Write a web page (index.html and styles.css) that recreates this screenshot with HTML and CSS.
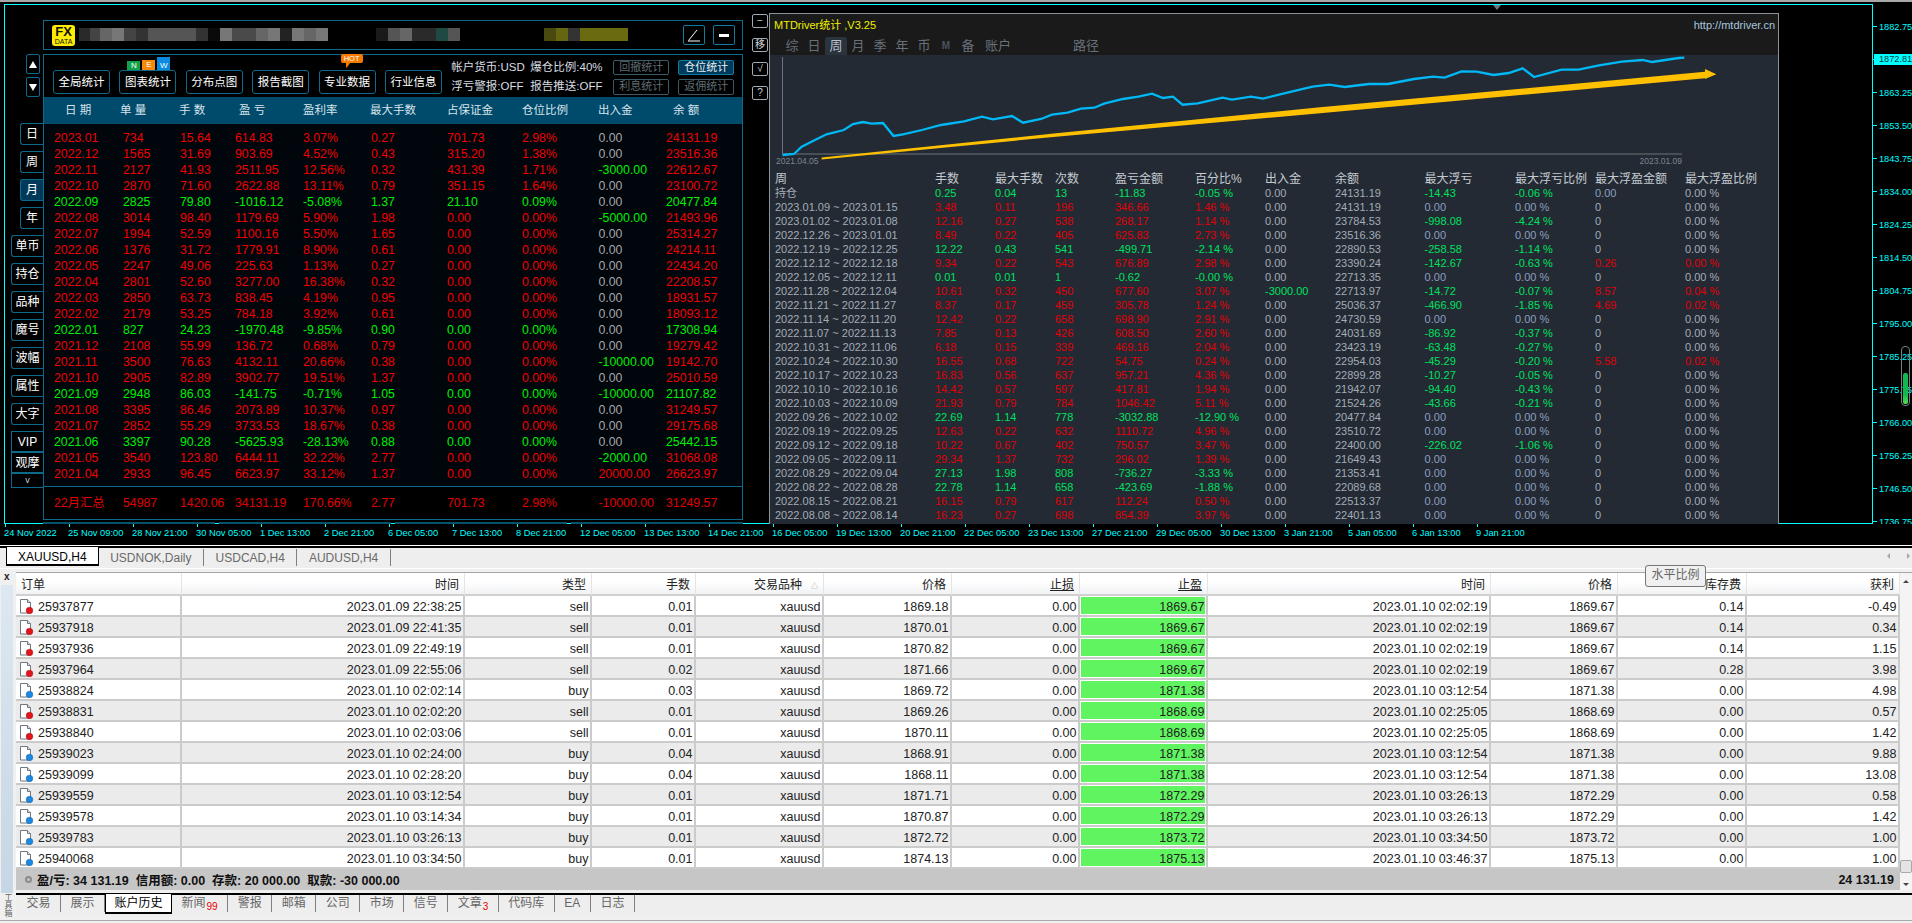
FILE: index.html
```html
<!DOCTYPE html>
<html lang="zh-CN">
<head>
    <meta charset="UTF-8">
    <title>XAUUSD,H4</title>
    <link rel="stylesheet" href="styles.css">
</head>
<body>
    <svg class="icon-defs" width="0" height="0">
        <symbol id="doc-sell" viewBox="0 0 15 15">
            <path d="M1.500.5h7l3 3v10.500h-10z" fill="#fff" stroke="#6f7780"/>
            <path d="M8.500.5v3h3" fill="#dfe3e8" stroke="#6f7780"/>
            <circle cx="10.500" cy="11.500" r="3.300" fill="#e0161c" stroke="#a80f12" stroke-width=".5"/>
        </symbol>
        <symbol id="doc-buy" viewBox="0 0 15 15">
            <path d="M1.500.5h7l3 3v10.500h-10z" fill="#fff" stroke="#6f7780"/>
            <path d="M8.500.5v3h3" fill="#dfe3e8" stroke="#6f7780"/>
            <circle cx="10.500" cy="11.500" r="3.300" fill="#1e88e0" stroke="#1260a8" stroke-width=".5"/>
        </symbol>
    </svg>

    <!-- chart window -->
    <div class="chart">
        <div class="chart-main">
            <div class="plot"></div>
            <div class="price-axis">
                <div class="price">1882.75</div>
                <div class="price"><span class="price-now">1872.81</span></div>
                <div class="price">1863.25</div>
                <div class="price">1853.50</div>
                <div class="price">1843.75</div>
                <div class="price">1834.00</div>
                <div class="price">1824.25</div>
                <div class="price">1814.50</div>
                <div class="price">1804.75</div>
                <div class="price">1795.00</div>
                <div class="price">1785.25</div>
                <div class="price">1775.75</div>
                <div class="price">1766.00</div>
                <div class="price">1756.25</div>
                <div class="price">1746.50</div>
                <div class="price">1736.75</div>
            </div>
        </div>
        <div class="time-axis">
            <span>24 Nov 2022</span><span>25 Nov 09:00</span><span>28 Nov 21:00</span><span>30 Nov 05:00</span>
            <span>1 Dec 13:00</span><span>2 Dec 21:00</span><span>6 Dec 05:00</span><span>7 Dec 13:00</span>
            <span>8 Dec 21:00</span><span>12 Dec 05:00</span><span>13 Dec 13:00</span><span>14 Dec 21:00</span>
            <span>16 Dec 05:00</span><span>19 Dec 13:00</span><span>20 Dec 21:00</span><span>22 Dec 05:00</span>
            <span>23 Dec 13:00</span><span>27 Dec 21:00</span><span>29 Dec 05:00</span><span>30 Dec 13:00</span>
            <span>3 Jan 21:00</span><span>5 Jan 05:00</span><span>6 Jan 13:00</span><span>9 Jan 21:00</span>
        </div>

        <div class="shift-mark"></div>
        <div class="thermo"><div class="thermo-fill"></div></div>

        <!-- FX DATA panel -->
        <div class="scroll-btns">
            <div class="scroll-btn"><i class="tri-up"></i></div>
            <div class="scroll-btn"><i class="tri-down"></i></div>
        </div>
        <div class="side-tabs">
            <div class="side-tab">日</div>
            <div class="side-tab">周</div>
            <div class="side-tab active">月</div>
            <div class="side-tab">年</div>
            <div class="side-tab wide">单币</div>
            <div class="side-tab wide">持仓</div>
            <div class="side-tab wide">品种</div>
            <div class="side-tab wide">魔号</div>
            <div class="side-tab wide">波幅</div>
            <div class="side-tab wide">属性</div>
            <div class="side-tab wide">大字</div>
            <div class="side-stack">
                <div class="side-tab wide">VIP</div>
                <div class="side-tab wide">观摩</div>
                <div class="side-tab wide more">v</div>
            </div>
        </div>

        <div class="fx-panel">
            <div class="fx-head">
                <div class="fx-logo"><b>FX</b><span>DATA</span></div>
                <div class="fx-blur"></div>
                <div class="fx-tool">
                    <svg width="16" height="14" viewBox="0 0 16 14"><path d="M2 13h12M2.500 12.500 11 2" fill="none" stroke="#fff"/></svg>
                </div>
                <div class="fx-tool"><span class="fx-minus"></span></div>
            </div>
            <div class="fx-box">
                <div class="fx-toolbar">
                    <div class="fx-btn">全局统计</div>
                    <div class="fx-btn">图表统计
                        <div class="new-badge"><i class="n">N</i><i class="e">E</i><i class="w">W</i></div>
                    </div>
                    <div class="fx-btn">分布点图</div>
                    <div class="fx-btn">报告截图</div>
                    <div class="fx-btn">专业数据<i class="hot-badge">HOT</i></div>
                    <div class="fx-btn">行业信息</div>
                    <div class="fx-info">
                        <span>帐户货币:USD</span>
                        <span>爆仓比例:40%</span>
                        <div class="fx-mini">回撤统计</div>
                        <div class="fx-mini on">仓位统计</div>
                        <span>浮亏警报:OFF</span>
                        <span>报告推送:OFF</span>
                        <div class="fx-mini">利息统计</div>
                        <div class="fx-mini">返佣统计</div>
                    </div>
                </div>
                <div class="fx-thead">
                    <span>日 期</span><span>单 量</span><span>手 数</span><span>盈 亏</span><span>盈利率</span>
                    <span>最大手数</span><span>占保证金</span><span>仓位比例</span><span>出入金</span><span>余 额</span>
                </div>
                <div class="fx-rows" id="monthRows"></div>
                <div class="fx-row fx-total">
                    <span>22月汇总</span><span>54987</span><span>1420.06</span><span>34131.19</span><span>170.66%</span>
                    <span>2.77</span><span>701.73</span><span>2.98%</span><span>-10000.00</span><span>31249.57</span>
                </div>
            </div>
            <div class="fx-marks"><i></i><i></i><i></i><i></i></div>
        </div>

        <!-- MTDriver panel -->
        <div class="md-btns">
            <div class="md-btn">−</div>
            <div class="md-btn">移</div>
            <div class="md-btn">√</div>
            <div class="md-btn">?</div>
        </div>
        <div class="md-panel">
            <div class="md-head">
                <div class="md-title">
                    <span>MTDriver统计 ,V3.25</span>
                    <span class="md-url">http://mtdriver.cn</span>
                </div>
                <div class="md-tabs">
                    <span>综</span><span>日</span><span class="active">周</span><span>月</span><span>季</span>
                    <span>年</span><span>币</span><span class="dim">M</span><span>备</span>
                    <span class="long">账户</span><span class="path">路径</span>
                </div>
            </div>
            <svg class="md-chart" width="1009" height="117" viewBox="770 55 1009 117">
                <path d="M782.500 57V154H1682" fill="none" stroke="#6c737b"/>
                <polyline fill="none" stroke="#00b8f5" stroke-width="2.300" points="782.500,155 794,154 801.700,146.700 813,141 826.500,134.300 843.800,130 853,124 863,122 871.700,123.700 883,123 893.500,136 903,134.300 922,130 941,125 964,121.300 982,116.700 993,119.300 1012,116 1023,122.700 1041,119 1052,114.700 1067.600,112.700 1081,108.700 1094.400,107.700 1104,103.700 1123,99 1138.400,96.700 1152,93.700 1163,98 1173,96.700 1182.500,104.700 1197.700,103.300 1222.600,97.700 1232,99.700 1251,96.700 1263,98.700 1280,94.300 1301,89.300 1312.600,86.700 1329.400,84.700 1344.500,87 1369,84 1388,84 1414,79 1433,76.700 1444.600,77.700 1461.600,71.300 1476.700,71.700 1493.600,75 1508.800,73 1522.700,68.300 1534,77 1561.600,69.700 1578.600,69.700 1599,65.300 1622,61.700 1642.800,60 1652,62 1678.600,58 1684.300,57.700"/>
                <polygon fill="#ffc000" points="821.600,157.400 1056,133.300 1320,107.300 1705,71.700 1705,69 1716.400,74.300 1705,79 1705,78.300 1320,113.300 1056,136.700 821.600,159.400"/>
                <text class="md-date" x="776" y="164">2021.04.05</text>
                <text class="md-date" x="1682" y="164" text-anchor="end">2023.01.09</text>
            </svg>
            <div class="md-thead md-row">
                <span>周</span><span>手数</span><span>最大手数</span><span>次数</span><span>盈亏金额</span><span>百分比%</span>
                <span>出入金</span><span>余额</span><span>最大浮亏</span><span>最大浮亏比例</span><span>最大浮盈金额</span><span>最大浮盈比例</span>
            </div>
            <div id="weekRows"></div>
        </div>
    </div>

    <!-- open chart tabs -->
    <div class="symbol-tabs">
        <div class="symbol-tab active">XAUUSD,H4</div>
        <div class="symbol-tab">USDNOK,Daily</div>
        <div class="symbol-tab">USDCAD,H4</div>
        <div class="symbol-tab">AUDUSD,H4</div>
        <div class="symbol-nav"><i class="prev"></i><i class="next"></i></div>
    </div>

    <!-- terminal -->
    <div class="terminal">
        <div class="term-side">
            <div class="term-close">x</div>
            <div class="term-strip"></div>
            <div class="term-label">工具箱</div>
        </div>
        <div class="term-main">
            <div class="history">
                <div class="history-body">
                    <table class="orders">
                        <colgroup>
                            <col class="c-id"><col class="c-time"><col class="c-type"><col class="c-lot"><col class="c-price"><col class="c-price">
                            <col class="c-price"><col class="c-price"><col class="c-time"><col class="c-type"><col class="c-swap"><col class="c-profit">
                        </colgroup>
                        <thead>
                            <tr>
                                <th class="left">订单</th><th>时间</th><th>类型</th><th>手数</th>
                                <th>交易品种<i class="sort">△</i></th><th>价格</th><th class="mark">止损</th><th class="mark">止盈</th>
                                <th>时间</th><th>价格</th><th>库存费</th><th>获利</th>
                            </tr>
                        </thead>
                        <tbody id="orderRows"></tbody>
                    </table>
                    <div class="summary">
                        <span class="summary-dot"></span>
                        <span>盈/亏: 34 131.19&nbsp; 信用额: 0.00&nbsp; 存款: 20 000.00&nbsp; 取款: -30 000.00</span>
                        <span class="summary-total">24 131.19</span>
                    </div>
                </div>
                <div class="scrollbar">
                    <i class="arrow-up"></i>
                    <div class="thumb"></div>
                    <i class="arrow-down"></i>
                </div>
            </div>
            <div class="term-tabs">
                <div class="term-tab">交易</div>
                <div class="term-tab">展示</div>
                <div class="term-tab active">账户历史</div>
                <div class="term-tab">新闻<sub>99</sub></div>
                <div class="term-tab">警报</div>
                <div class="term-tab">邮箱</div>
                <div class="term-tab">公司</div>
                <div class="term-tab">市场</div>
                <div class="term-tab">信号</div>
                <div class="term-tab">文章<sub>3</sub></div>
                <div class="term-tab">代码库</div>
                <div class="term-tab">EA</div>
                <div class="term-tab">日志</div>
            </div>
            <div class="status-bar"></div>
        </div>
    </div>

    <div class="tooltip">水平比例</div>

    <script src="rows.js"></script>
</body>
</html>
```

FILE: styles.css
```css
* {
    box-sizing: border-box;
}
body {
    position: relative;
    width: 1912px;
    height: 923px;
    margin: 0;
    overflow: hidden;
    background: #f0f0f0;
    font-family: "Liberation Sans", "Noto Sans CJK SC", sans-serif;
    font-size: 12px;
}
i {
    font-style: normal;
}
.icon-defs {
    position: absolute;
}

/* chart window */
.chart {
    position: relative;
    height: 546px;
    padding-top: 4px;
    background: #000;
    border-bottom: 1px solid #fff;
    box-shadow: inset 0 2px #a8a8a8;
}
.chart-main {
    display: flex;
}
.plot {
    width: 1869px;
    height: 520px;
    margin-left: 4px;
    border: 1px solid #00ffff;
}
.price-axis {
    width: 39px;
    height: 520px;
    padding-top: 6px;
    overflow: hidden;
}
.price {
    display: flex;
    align-items: center;
    height: 33px;
    padding-left: 6px;
    color: #00ffff;
    font-size: 9.2px;
    position: relative;
}
.price::before {
    content: "";
    position: absolute;
    left: 0;
    top: 16px;
    width: 4px;
    height: 1px;
    background: #00ffff;
}
.price-now {
    flex: none;
    width: 38px;
    height: 11px;
    margin-left: -5px;
    padding-left: 5px;
    background: #00ffff;
    color: #004040;
    line-height: 11px;
}
.time-axis {
    display: flex;
    padding-left: 4px;
    color: #00ffff;
    font-size: 9.3px;
    white-space: nowrap;
}
.time-axis span {
    flex: none;
    width: 64px;
}
.time-axis span::before {
    content: "";
    display: block;
    width: 1px;
    height: 3px;
    margin-left: 1px;
    margin-bottom: 1px;
    background: #00ffff;
}
.shift-mark {
    position: absolute;
    left: 1493px;
    top: 5px;
    border: 4px solid transparent;
    border-top: 5px solid #6c7680;
}
.thermo {
    position: absolute;
    left: 1901px;
    top: 346px;
    width: 9px;
    height: 60px;
    padding: 1px;
    display: flex;
    align-items: flex-end;
    border: 1px solid #77808a;
    border-radius: 4px;
}
.thermo-fill {
    width: 100%;
    height: 31px;
    border-radius: 2px;
    background: linear-gradient(#12b84e 70%, #58e050);
}

/* FX DATA panel */
.scroll-btns {
    position: absolute;
    left: 26px;
    top: 54px;
    display: flex;
    flex-direction: column;
    gap: 3px;
}
.scroll-btn {
    display: flex;
    align-items: center;
    justify-content: center;
    width: 14px;
    height: 20px;
    border: 1px solid #0d6a8a;
    border-radius: 2px;
}
.tri-up {
    border: 4px solid transparent;
    border-top: none;
    border-bottom: 7px solid #fff;
}
.tri-down {
    border: 4px solid transparent;
    border-bottom: none;
    border-top: 7px solid #fff;
}
.side-tabs {
    position: absolute;
    right: 1869px;
    top: 123px;
    display: flex;
    flex-direction: column;
    align-items: flex-end;
    gap: 6px;
}
.side-stack {
    display: flex;
    flex-direction: column;
    align-items: flex-end;
}
.side-tab {
    width: 23px;
    height: 22px;
    border: 1px solid #0d6a8a;
    border-right: none;
    border-radius: 3px 0 0 3px;
    color: #fff;
    font-size: 12px;
    line-height: 20px;
    text-align: center;
}
.side-tab.wide {
    width: 32px;
}
.side-stack .side-tab {
    border-radius: 0;
    height: 21px;
}
.side-stack .side-tab.more {
    height: 15px;
    font-size: 9px;
    line-height: 12px;
    color: #c8d0d8;
}
.side-tab.active {
    background: #003a5a;
}
.fx-panel {
    position: absolute;
    left: 43px;
    top: 20px;
    width: 700px;
    color: #fff;
}
.fx-head {
    display: flex;
    align-items: center;
    gap: 8px;
    height: 30px;
    padding: 0 7px 0 8px;
    border: 1px solid #0d6a8a;
}
.fx-logo {
    flex: none;
    width: 23px;
    height: 21px;
    background: #ffec00;
    border-radius: 3px;
    color: #111;
    text-align: center;
    overflow: hidden;
}
.fx-logo b {
    display: block;
    font-size: 13px;
    line-height: 12px;
    padding-top: 1px;
}
.fx-logo span {
    display: block;
    font-size: 7px;
    line-height: 7px;
}
.fx-blur {
    flex: none;
    width: 561px;
    height: 13px;
    margin: -2px 35px 0 -4px;
    background: linear-gradient(90deg,
        #2a2a2a 0 11px, #444 0 21px, #666 0 33px, #777 0 45px, #444 0 57px, #333 0 69px,
        #555 0 117px, #333 0 129px, #0a0a0a 0 141px, #777 0 153px, #4a4a4a 0 177px, #666 0 189px,
        #777 0 201px, #222 0 213px, #777 0 225px, #666 0 237px, #777 0 249px, #000 0 297px,
        #1a1a1a 0 309px, #555 0 321px, #666 0 333px, #2a2a2a 0 357px, #1f4a44 0 369px, #555 0 381px,
        #000 0 465px, #4a4a10 0 477px, #666610 0 489px, #333 0 501px, #6a6a10 0 549px, #000 0);
}
.fx-tool {
    flex: none;
    display: flex;
    align-items: center;
    justify-content: center;
    width: 22px;
    height: 20px;
    border: 1px solid #0d7ca0;
    border-radius: 2px;
}
.fx-minus {
    width: 10px;
    height: 3px;
    background: #fff;
}
.fx-box {
    margin-top: 4px;
    border: 1px solid #0d6a8a;
    background: #00060c;
}
.fx-toolbar {
    display: flex;
    gap: 9.400px;
    height: 42px;
    padding: 15px 0 0 9px;
    background: #000;
}
.fx-btn {
    position: relative;
    flex: none;
    width: 57px;
    height: 24px;
    border: 1px solid #0d6a8a;
    border-radius: 3px;
    font-size: 11.500px;
    line-height: 22px;
    text-align: center;
}
.new-badge {
    position: absolute;
    left: 7px;
    bottom: 100%;
    margin-bottom: 1px;
    display: flex;
    align-items: flex-end;
    gap: 2px;
    font-size: 8px;
    line-height: 8px;
}
.new-badge i {
    width: 13px;
    padding-top: 1px;
}
.new-badge .n {
    background: #12a24a;
}
.new-badge .e {
    height: 10px;
    background: #f58a0a;
}
.new-badge .w {
    height: 13px;
    padding-top: 5px;
    background: #0a8ae0;
}
.hot-badge {
    position: absolute;
    left: 21px;
    top: -17px;
    width: 22px;
    height: 9px;
    background: #f77a00;
    border-radius: 2px;
    color: #fff;
    font-size: 7.500px;
    line-height: 9px;
}
.hot-badge::after {
    content: "";
    position: absolute;
    left: 5px;
    top: 9px;
    border: 2px solid transparent;
    border-top: 3px solid #f77a00;
    border-left: 2px solid #f77a00;
}
.fx-info {
    display: grid;
    grid-template-columns: 79px 83px 56px 56px;
    grid-template-rows: 15px 16px;
    column-gap: 0;
    row-gap: 4px;
    margin: -10px 0 0 0;
    font-size: 11.500px;
    line-height: 15px;
    color: #d8dde2;
    white-space: nowrap;
}
.fx-mini {
    border: 1px solid #3a5a68;
    border-radius: 2px;
    color: #5f6c74;
    font-size: 11px;
    line-height: 13px;
    text-align: center;
}
.fx-mini:nth-of-type(even) {
    margin-left: 9px;
    margin-right: -9px;
}
.fx-mini.on {
    background: #003a5a;
    border-color: #0d7ca0;
    color: #e8f0f5;
}
.fx-thead {
    display: grid;
    grid-template-columns: 55px 59px 60px 64px 67px 77px 75px 76px 75px 1fr;
    height: 27px;
    padding-left: 21px;
    background: #004a6b;
    color: #d8e4ec;
    font-size: 11.500px;
    line-height: 26px;
    white-space: nowrap;
}
.fx-rows {
    padding: 6px 0 4px;
}
.fx-row {
    display: grid;
    grid-template-columns: 69px 57px 55px 68px 68px 76px 75px 76.500px 67.500px 1fr;
    height: 16px;
    padding-left: 10px;
    font-size: 12.300px;
    line-height: 16px;
    white-space: nowrap;
}
.fx-row.loss {
    color: #f00000;
}
.fx-row.gain {
    color: #00f000;
}
.fx-row .flat {
    color: #a8a8a8;
}
.fx-row .in {
    color: #00f000;
}
.fx-row .out {
    color: #f00000;
}
.fx-total {
    height: 33px;
    border-top: 1px solid #0d6a8a;
    background: #000;
    color: #e00000;
    line-height: 32px;
}
.fx-marks {
    display: flex;
    gap: 4px;
    height: 2px;
    margin-top: 2px;
}
.fx-marks i {
    flex: 1;
    background: #05506b;
}

/* MTDriver panel */
.md-btns {
    position: absolute;
    left: 752px;
    top: 14px;
    display: flex;
    flex-direction: column;
    gap: 10px;
}
.md-btn {
    width: 16px;
    height: 14px;
    border: 1px solid #a0a8b0;
    border-radius: 2px;
    color: #d0d4d8;
    font-size: 10px;
    line-height: 12px;
    text-align: center;
}
.md-panel {
    position: absolute;
    left: 769px;
    top: 13px;
    width: 1010px;
    height: 511px;
    border: 1px solid #8a929a;
    border-bottom: none;
    background: #232a33;
    overflow: hidden;
}
.md-head {
    height: 41px;
    background: #1a1a1a;
}
.md-title {
    display: flex;
    justify-content: space-between;
    height: 23px;
    padding: 4px 3px 0 4px;
    color: #f0f000;
    font-size: 11px;
    line-height: 14px;
}
.md-url {
    color: #a9c7de;
}
.md-tabs {
    display: flex;
    padding-left: 11px;
    color: #68707a;
    font-size: 13px;
    line-height: 18px;
}
.md-tabs span {
    flex: none;
    width: 22px;
    text-align: center;
}
.md-tabs .active {
    background: #2b333d;
    color: #b8c0c8;
    border-radius: 2px 2px 0 0;
}
.md-tabs .dim {
    color: #4a5260;
    font-size: 10px;
    font-weight: bold;
}
.md-tabs .long {
    width: 26px;
    margin-left: 6px;
    white-space: nowrap;
}
.md-tabs .path {
    width: 26px;
    margin-left: 62px;
    white-space: nowrap;
}
.md-chart {
    display: block;
}
.md-date {
    fill: #7b8590;
    font-size: 8.500px;
}
.md-row {
    display: grid;
    grid-template-columns: 160px 60px 60px 60px 80px 70px 70px 89.600px 90.400px 80px 90px 1fr;
    height: 14px;
    padding-left: 5px;
    color: #a3acb8;
    font-size: 11px;
    line-height: 14px;
    white-space: nowrap;
}
.md-thead {
    color: #c4cad2;
    font-size: 12px;
}
.md-row .gain {
    color: #00e060;
}
.md-row .loss {
    color: #e00008;
}
.md-row .cool {
    color: #8c9fc0;
}

/* symbol tabs */
.symbol-tabs {
    display: flex;
    height: 22px;
    padding-left: 6px;
    border-top: 2px solid #000;
    background: #eeeeee;
    line-height: 19px;
}
.symbol-tab {
    flex: none;
    height: 17px;
    margin-top: 1px;
    padding: 0 11.500px;
    border-right: 1px solid #808080;
    color: #6a6a6a;
    white-space: nowrap;
}
.symbol-tab.active {
    height: 19px;
    margin: -1px 0 0 0;
    padding: 1px 11px 0;
    border: 1px solid #000;
    border-top: none;
    border-bottom-width: 2px;
    background: #fff;
    color: #000;
}
.symbol-nav {
    display: flex;
    gap: 17px;
    margin-left: auto;
    padding: 5px 2px 0 0;
}
.symbol-nav i {
    width: 0;
    height: 0;
    border: 3px solid transparent;
}
.symbol-nav .prev {
    border-left: none;
    border-right: 3px solid #a8a8a8;
}
.symbol-nav .next {
    border-right: none;
    border-left: 3px solid #a8a8a8;
}

/* terminal */
.terminal {
    display: flex;
    height: 355px;
    border-top: 1px solid #fff;
}
.term-side {
    flex: none;
    display: flex;
    flex-direction: column;
    width: 16px;
    padding-left: 1px;
}
.term-close {
    height: 16px;
    padding: 2px 0 0 3px;
    font-size: 10px;
    font-weight: bold;
    line-height: 12px;
    color: #222;
}
.term-strip {
    width: 12px;
    height: 308px;
    background: linear-gradient(#dde8f3, #c6d6e4);
}
.term-label {
    width: 12px;
    writing-mode: vertical-rl;
    font-size: 8px;
    line-height: 12px;
    color: #666;
}
.term-main {
    flex: 1;
    display: flex;
    flex-direction: column;
    min-width: 0;
    padding-top: 3px;
}
.history {
    display: flex;
    height: 318px;
    background: #fff;
    border-top: 1px solid #a6a6a6;
}
.history-body {
    flex: 1;
    min-width: 0;
}
.orders {
    width: 100%;
    table-layout: fixed;
    border-collapse: separate;
    border-spacing: 0;
    font-size: 12.500px;
    color: #222;
}
.c-id { width: 166px; }
.c-time { width: 283px; }
.c-type { width: 127px; }
.c-lot { width: 104px; }
.c-price { width: 128px; }
.c-swap { width: 129px; }
.c-profit { width: 153px; }
.orders th {
    height: 23px;
    padding: 0 5px 0 0;
    border-right: 1px solid #e4e4e4;
    border-bottom: 2px solid #d0d0d0;
    background: linear-gradient(#fff 40%, #f1f2f4);
    font-size: 12px;
    font-weight: normal;
    text-align: right;
    white-space: nowrap;
}
.orders th.left {
    padding-left: 5px;
    text-align: left;
}
.orders th.mark {
    text-decoration: underline;
}
.sort {
    margin: 0 0 0 9px;
    font-size: 7px;
    color: #999;
    vertical-align: 1px;
}
.orders td {
    height: 21px;
    padding: 2px 1.500px 0 0;
    border-right: 2px solid #cbcbcb;
    border-bottom: 2px solid #cbcbcb;
    text-align: right;
    white-space: nowrap;
}
.orders tr:nth-child(even) td {
    background: #ebebeb;
}
.orders td.order {
    padding-left: 3px;
    text-align: left;
}
.order-id {
    display: flex;
    align-items: center;
    gap: 4px;
}
.orders tr td.tp {
    background: #60f560;
    box-shadow: inset 0 0 0 1px #fff;
}
.summary {
    display: flex;
    align-items: center;
    gap: 5px;
    height: 21px;
    padding: 0 6px 0 9px;
    background: #c6c6c6;
    color: #111;
    font-weight: bold;
    font-size: 12.500px;
    white-space: pre;
}
.summary-dot {
    width: 7px;
    height: 7px;
    border: 2px solid #8c8c8c;
    border-radius: 50%;
}
.summary-total {
    margin-left: auto;
}
.scrollbar {
    flex: none;
    display: flex;
    flex-direction: column;
    align-items: center;
    width: 12px;
    padding: 7px 0 4px;
    background: #f4f4f4;
}
.arrow-up,
.arrow-down {
    width: 0;
    height: 0;
    border: 3px solid transparent;
    border-top: none;
    border-bottom: 3px solid #444;
}
.arrow-down {
    border: 3px solid transparent;
    border-bottom: none;
    border-top: 3px solid #444;
}
.thumb {
    width: 12px;
    height: 13px;
    margin-top: auto;
    margin-bottom: 10px;
    background: #e4e4e4;
    border: 1px solid #a8a8a8;
    border-radius: 2px;
}
.term-tabs {
    display: flex;
    height: 24px;
    margin-top: 3px;
    padding-left: 1px;
    border-top: 2px solid #000;
    background: #eeeeee;
    line-height: 17px;
    color: #666;
}
.term-tab {
    flex: none;
    height: 17px;
    margin-top: 0;
    padding: 0 9.500px;
    border-right: 1px solid #808080;
    white-space: nowrap;
}
.term-tab sub {
    margin-left: 1px;
    color: #e80000;
    font-size: 10px;
    line-height: 0;
}
.term-tab.active {
    height: 20px;
    margin: -1px 0 0 0;
    padding: 1px 8.500px 0;
    border: 1px solid #000;
    border-top: none;
    border-bottom-width: 2px;
    background: #fff;
    color: #000;
}
.status-bar {
    flex: 1;
    margin: 3px 0 0 -16px;
    border-top: 1px solid #a8a8a8;
}
.tooltip {
    position: absolute;
    left: 1645px;
    top: 565px;
    width: 61px;
    height: 22px;
    border: 1px solid #777;
    border-radius: 3px;
    background: #f0f0f0;
    color: #666;
    font-size: 12px;
    line-height: 19px;
    text-align: center;
}
```

FILE: rows.js
```js
// date|orders|lots|profit|pct|max lots|margin|margin pct|flow|balance
const months = `2023.01|734|15.64|614.83|3.07%|0.27|701.73|2.98%|0.00|24131.19
2022.12|1565|31.69|903.69|4.52%|0.43|315.20|1.38%|0.00|23516.36
2022.11|2127|41.93|2511.95|12.56%|0.32|431.39|1.71%|-3000.00|22612.67
2022.10|2870|71.60|2622.88|13.11%|0.79|351.15|1.64%|0.00|23100.72
2022.09|2825|79.80|-1016.12|-5.08%|1.37|21.10|0.09%|0.00|20477.84
2022.08|3014|98.40|1179.69|5.90%|1.98|0.00|0.00%|-5000.00|21493.96
2022.07|1994|52.59|1100.16|5.50%|1.65|0.00|0.00%|0.00|25314.27
2022.06|1376|31.72|1779.91|8.90%|0.61|0.00|0.00%|0.00|24214.11
2022.05|2247|49.06|225.63|1.13%|0.27|0.00|0.00%|0.00|22434.20
2022.04|2801|52.60|3277.00|16.38%|0.32|0.00|0.00%|0.00|22208.57
2022.03|2850|63.73|838.45|4.19%|0.95|0.00|0.00%|0.00|18931.57
2022.02|2179|53.25|784.18|3.92%|0.61|0.00|0.00%|0.00|18093.12
2022.01|827|24.23|-1970.48|-9.85%|0.90|0.00|0.00%|0.00|17308.94
2021.12|2108|55.99|136.72|0.68%|0.79|0.00|0.00%|0.00|19279.42
2021.11|3500|76.63|4132.11|20.66%|0.38|0.00|0.00%|-10000.00|19142.70
2021.10|2905|82.89|3902.77|19.51%|1.37|0.00|0.00%|0.00|25010.59
2021.09|2948|86.03|-141.75|-0.71%|1.05|0.00|0.00%|-10000.00|21107.82
2021.08|3395|86.46|2073.89|10.37%|0.97|0.00|0.00%|0.00|31249.57
2021.07|2852|55.29|3733.53|18.67%|0.38|0.00|0.00%|0.00|29175.68
2021.06|3397|90.28|-5625.93|-28.13%|0.88|0.00|0.00%|0.00|25442.15
2021.05|3540|123.80|6444.11|32.22%|2.77|0.00|0.00%|-2000.00|31068.08
2021.04|2933|96.45|6623.97|33.12%|1.37|0.00|0.00%|20000.00|26623.97`;

const weeks = `持仓|0.25|0.04|13|-11.83|-0.05 %|0.00|24131.19|-14.43|-0.06 %|0.00|0.00 %
2023.01.09 ~ 2023.01.15|3.48|0.11|196|346.66|1.46 %|0.00|24131.19|0.00|0.00 %|0|0.00 %
2023.01.02 ~ 2023.01.08|12.16|0.27|538|268.17|1.14 %|0.00|23784.53|-998.08|-4.24 %|0|0.00 %
2022.12.26 ~ 2023.01.01|8.49|0.22|405|625.83|2.73 %|0.00|23516.36|0.00|0.00 %|0|0.00 %
2022.12.19 ~ 2022.12.25|12.22|0.43|541|-499.71|-2.14 %|0.00|22890.53|-258.58|-1.14 %|0|0.00 %
2022.12.12 ~ 2022.12.18|9.34|0.22|543|676.89|2.98 %|0.00|23390.24|-142.67|-0.63 %|0.26|0.00 %
2022.12.05 ~ 2022.12.11|0.01|0.01|1|-0.62|-0.00 %|0.00|22713.35|0.00|0.00 %|0|0.00 %
2022.11.28 ~ 2022.12.04|10.61|0.32|450|677.60|3.07 %|-3000.00|22713.97|-14.72|-0.07 %|8.57|0.04 %
2022.11.21 ~ 2022.11.27|8.37|0.17|459|305.78|1.24 %|0.00|25036.37|-466.90|-1.85 %|4.69|0.02 %
2022.11.14 ~ 2022.11.20|12.42|0.22|658|698.90|2.91 %|0.00|24730.59|0.00|0.00 %|0|0.00 %
2022.11.07 ~ 2022.11.13|7.85|0.13|426|608.50|2.60 %|0.00|24031.69|-86.92|-0.37 %|0|0.00 %
2022.10.31 ~ 2022.11.06|6.18|0.15|339|469.16|2.04 %|0.00|23423.19|-63.48|-0.27 %|0|0.00 %
2022.10.24 ~ 2022.10.30|16.55|0.68|722|54.75|0.24 %|0.00|22954.03|-45.29|-0.20 %|5.58|0.02 %
2022.10.17 ~ 2022.10.23|16.83|0.56|637|957.21|4.36 %|0.00|22899.28|-10.27|-0.05 %|0|0.00 %
2022.10.10 ~ 2022.10.16|14.42|0.57|597|417.81|1.94 %|0.00|21942.07|-94.40|-0.43 %|0|0.00 %
2022.10.03 ~ 2022.10.09|21.93|0.79|784|1046.42|5.11 %|0.00|21524.26|-43.66|-0.21 %|0|0.00 %
2022.09.26 ~ 2022.10.02|22.69|1.14|778|-3032.88|-12.90 %|0.00|20477.84|0.00|0.00 %|0|0.00 %
2022.09.19 ~ 2022.09.25|12.63|0.22|632|1110.72|4.96 %|0.00|23510.72|0.00|0.00 %|0|0.00 %
2022.09.12 ~ 2022.09.18|10.22|0.67|402|750.57|3.47 %|0.00|22400.00|-226.02|-1.06 %|0|0.00 %
2022.09.05 ~ 2022.09.11|29.34|1.37|732|296.02|1.39 %|0.00|21649.43|0.00|0.00 %|0|0.00 %
2022.08.29 ~ 2022.09.04|27.13|1.98|808|-736.27|-3.33 %|0.00|21353.41|0.00|0.00 %|0|0.00 %
2022.08.22 ~ 2022.08.28|22.78|1.14|658|-423.69|-1.88 %|0.00|22089.68|0.00|0.00 %|0|0.00 %
2022.08.15 ~ 2022.08.21|16.15|0.79|617|112.24|0.50 %|0.00|22513.37|0.00|0.00 %|0|0.00 %
2022.08.08 ~ 2022.08.14|16.23|0.27|698|854.39|3.97 %|0.00|22401.13|0.00|0.00 %|0|0.00 %`;

const orders = `25937877|2023.01.09 22:38:25|sell|0.01|1869.18|1869.67|2023.01.10 02:02:19|1869.67|0.14|-0.49
25937918|2023.01.09 22:41:35|sell|0.01|1870.01|1869.67|2023.01.10 02:02:19|1869.67|0.14|0.34
25937936|2023.01.09 22:49:19|sell|0.01|1870.82|1869.67|2023.01.10 02:02:19|1869.67|0.14|1.15
25937964|2023.01.09 22:55:06|sell|0.02|1871.66|1869.67|2023.01.10 02:02:19|1869.67|0.28|3.98
25938824|2023.01.10 02:02:14|buy|0.03|1869.72|1871.38|2023.01.10 03:12:54|1871.38|0.00|4.98
25938831|2023.01.10 02:02:20|sell|0.01|1869.26|1868.69|2023.01.10 02:25:05|1868.69|0.00|0.57
25938840|2023.01.10 02:03:06|sell|0.01|1870.11|1868.69|2023.01.10 02:25:05|1868.69|0.00|1.42
25939023|2023.01.10 02:24:00|buy|0.04|1868.91|1871.38|2023.01.10 03:12:54|1871.38|0.00|9.88
25939099|2023.01.10 02:28:20|buy|0.04|1868.11|1871.38|2023.01.10 03:12:54|1871.38|0.00|13.08
25939559|2023.01.10 03:12:54|buy|0.01|1871.71|1872.29|2023.01.10 03:26:13|1872.29|0.00|0.58
25939578|2023.01.10 03:14:34|buy|0.01|1870.87|1872.29|2023.01.10 03:26:13|1872.29|0.00|1.42
25939783|2023.01.10 03:26:13|buy|0.01|1872.72|1873.72|2023.01.10 03:34:50|1873.72|0.00|1.00
25940068|2023.01.10 03:34:50|buy|0.01|1874.13|1875.13|2023.01.10 03:46:37|1875.13|0.00|1.00`;

function parse(text) {
    return text.split('\n').map(line => line.split('|'));
}

document.getElementById('monthRows').innerHTML = parse(months).map(cells => {
    const rowClass = cells[3].startsWith('-') ? 'gain' : 'loss';
    const spans = cells.map((value, i) => {
        if (i !== 8) return `<span>${value}</span>`;
        const flowClass = value === '0.00' ? 'flat' : (value.startsWith('-') ? 'in' : 'out');
        return `<span class="${flowClass}">${value}</span>`;
    });
    return `<div class="fx-row ${rowClass}">${spans.join('')}</div>`;
}).join('');

document.getElementById('weekRows').innerHTML = parse(weeks).map(cells => {
    const rowClass = cells[4].startsWith('-') ? 'gain' : 'loss';
    const spans = cells.map((value, i) => {
        let cls = '';
        if (i >= 1 && i <= 5) cls = rowClass;
        if (i === 6 && value.startsWith('-')) cls = 'gain';
        if (i === 8 || i === 9) cls = value.startsWith('-') ? 'gain' : 'cool';
        if (i === 10) cls = value === '0.00' ? 'cool' : (value === '0' ? '' : 'loss');
        if (i === 11 && cells[10] !== '0' && cells[10] !== '0.00') cls = 'loss';
        return `<span class="${cls}">${value}</span>`;
    });
    return `<div class="md-row">${spans.join('')}</div>`;
}).join('');

document.getElementById('orderRows').innerHTML = parse(orders).map(c => `
    <tr>
        <td class="order"><div class="order-id"><svg width="15" height="15"><use href="#doc-${c[2]}"/></svg>${c[0]}</div></td>
        <td>${c[1]}</td><td>${c[2]}</td><td>${c[3]}</td><td>xauusd</td><td>${c[4]}</td><td>0.00</td>
        <td class="tp">${c[5]}</td><td>${c[6]}</td><td>${c[7]}</td><td>${c[8]}</td><td>${c[9]}</td>
    </tr>`).join('');
```
